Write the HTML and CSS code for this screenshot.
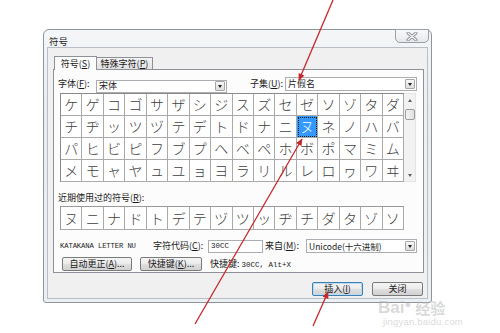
FILE: index.html
```html
<!DOCTYPE html>
<html>
    <head>
        <meta charset="utf-8">
        <title>符号</title>
        <link rel="stylesheet" href="styles.css">
    </head>
    <body>
        <div class="window">
            <div class="titlebar">
                <span class="title">符号</span>
                <span class="close">
                    <svg width="12" height="9" viewBox="0 0 12 9">
                        <path d="M2,1 L10,8 M10,1 L2,8" stroke="#8a8d92" stroke-width="3" stroke-linecap="round"/>
                        <path d="M2,1 L10,8 M10,1 L2,8" stroke="#f4f5f6" stroke-width="1.2" stroke-linecap="round"/>
                    </svg>
                </span>
            </div>
            <div class="client">
                <div class="tabs">
                    <span class="tab active">符号(<u>S</u>)</span>
                    <span class="tab second">特殊字符(<u>P</u>)</span>
                </div>
                <div class="panel">
                    <div class="row font-row">
                        <label class="font-label">字体(<u>F</u>):</label>
                        <span class="combo font-combo">宋体<i class="drop"></i></span>
                        <label class="subset-label">子集(<u>U</u>):</label>
                        <span class="combo subset-combo">片假名<i class="drop"></i></span>
                    </div>
                    <div class="grid-wrap">
                        <div class="grid">
                            <span>ケ</span><span>ゲ</span><span>コ</span><span>ゴ</span><span>サ</span><span>ザ</span><span>シ</span><span>ジ</span><span>ス</span><span>ズ</span><span>セ</span><span>ゼ</span><span>ソ</span><span>ゾ</span><span>タ</span><span>ダ</span>
                            <span>チ</span><span>ヂ</span><span>ッ</span><span>ツ</span><span>ヅ</span><span>テ</span><span>デ</span><span>ト</span><span>ド</span><span>ナ</span><span>ニ</span><span class="selected">ヌ</span><span>ネ</span><span>ノ</span><span>ハ</span><span>バ</span>
                            <span>パ</span><span>ヒ</span><span>ビ</span><span>ピ</span><span>フ</span><span>ブ</span><span>プ</span><span>ヘ</span><span>ベ</span><span>ペ</span><span>ホ</span><span>ボ</span><span>ポ</span><span>マ</span><span>ミ</span><span>ム</span>
                            <span>メ</span><span>モ</span><span>ャ</span><span>ヤ</span><span>ュ</span><span>ユ</span><span>ョ</span><span>ヨ</span><span>ラ</span><span>リ</span><span>ル</span><span>レ</span><span>ロ</span><span>ヮ</span><span>ワ</span><span>ヰ</span>
                        </div>
                        <div class="scroll">
                            <span class="arrow up"></span>
                            <span class="thumb"></span>
                            <span class="arrow down"></span>
                        </div>
                    </div>
                    <div class="recent-label">近期使用过的符号(<u>R</u>):</div>
                    <div class="grid recent">
                        <span>ヌ</span><span>ニ</span><span>ナ</span><span>ド</span><span>ト</span><span>デ</span><span>テ</span><span>ヅ</span><span>ツ</span><span>ッ</span><span>ヂ</span><span>チ</span><span>ダ</span><span>タ</span><span>ゾ</span><span>ソ</span>
                    </div>
                    <div class="row info-row">
                        <span class="char-name">KATAKANA LETTER NU</span>
                        <label class="code-label">字符代码(<u>C</u>):</label>
                        <span class="combo code-input">30CC</span>
                        <label class="from-label">来自(<u>M</u>):</label>
                        <span class="combo from-combo">Unicode(十六进制)<i class="drop"></i></span>
                    </div>
                    <div class="row btn-row">
                        <span class="btn auto-btn">自动更正(<u>A</u>)...</span>
                        <span class="btn key-btn">快捷键(<u>K</u>)...</span>
                        <span class="shortcut">快捷键: <span class="mono">30CC, Alt+X</span></span>
                    </div>
                </div>
                <div class="footer">
                    <span class="btn default">插入(<u>I</u>)</span>
                    <span class="btn">关闭</span>
                </div>
            </div>
        </div>

        <!-- annotation arrows drawn over the screenshot -->
        <svg class="arrows" width="500" height="333" viewBox="0 0 500 333">
            <defs>
                <marker id="head" viewBox="0 0 10 10" refX="9" refY="5" markerWidth="8" markerHeight="7" markerUnits="userSpaceOnUse" orient="auto">
                    <path d="M0,0.5 L10,5 L0,9.5 z" fill="#c4282b"/>
                </marker>
            </defs>
            <line x1="333" y1="0" x2="299" y2="80" stroke="#c4282b" stroke-width="1.3" marker-end="url(#head)"/>
            <line x1="195" y1="324" x2="302" y2="139" stroke="#c4282b" stroke-width="1.3" marker-end="url(#head)"/>
            <line x1="313" y1="326" x2="328" y2="292" stroke="#c4282b" stroke-width="1.3" marker-end="url(#head)"/>
        </svg>

        <div class="watermark">
            <div class="wm-top">Bai<span class="paw">●</span><span class="wm-cn">经验</span></div>
            <div class="wm-url">jingyan.baidu.com</div>
        </div>
    </body>
</html>
```

FILE: styles.css
```css
body {
    margin: 0;
    width: 500px;
    height: 333px;
    overflow: hidden;
    position: relative;
    background: #fff;
    font-family: "Noto Sans CJK SC", "Noto Sans", sans-serif;
    font-size: 9px;
    line-height: 12px;
    color: #1a1a1a;
}
u {
    text-decoration: underline;
    text-underline-offset: 1px;
}

/* window frame */
.window {
    margin: 29px 0 0 43px;
    width: 389px;
    box-sizing: border-box;
    border: 1px solid #8f949a;
    border-radius: 6px 6px 3px 3px;
    background: linear-gradient(to bottom, #f4f6f8, #e8ecf0 30%, #edf0f3);
    padding: 0 3px 3px 3px;
}
.titlebar {
    height: 17px;
    display: flex;
    justify-content: space-between;
}
.title {
    font-size: 9.5px;
    margin: 5px 0 0 2px;
}
.close {
    width: 34px;
    height: 14px;
    box-sizing: border-box;
    margin: -1px -1px 0 0;
    border: 1px solid #9a9ea5;
    border-radius: 0 0 5px 5px;
    background: linear-gradient(#f8f9fa, #e6e9ec);
    display: flex;
    align-items: center;
    justify-content: center;
}
.client {
    background: #f0f0f0;
    border: 1px solid #b7bec6;
    padding: 8px 3px 2px 5px;
}

/* tabs */
.tabs {
    display: flex;
    height: 13px;
    margin-left: 1px;
    position: relative;
    z-index: 1;
}
.tab {
    box-sizing: border-box;
    height: 12px;
    margin-top: 1px;
    border: 1px solid #8e9199;
    border-bottom: none;
    background: linear-gradient(#f3f3f3, #e2e2e2);
    text-align: center;
    line-height: 11px;
}
.tab.active {
    width: 43px;
    height: 14px;
    margin-top: 0;
    background: #fcfcfc;
    line-height: 13px;
}
.tab.second {
    width: 56px;
    border-left: none;
}
.panel {
    box-sizing: border-box;
    height: 204px;
    border: 1px solid #8e9199;
    background: #fcfcfc;
    padding: 7px 0 0 4px;
}

/* form rows */
.row {
    display: flex;
    align-items: center;
}
.font-row {
    height: 14px;
}
.font-label {
    width: 38px;
}
.combo {
    box-sizing: border-box;
    height: 14px;
    border: 1px solid #abadb3;
    background: #fff;
    display: flex;
    align-items: center;
    justify-content: space-between;
    padding-left: 2px;
}
.font-combo {
    width: 131px;
    height: 13px;
    margin-top: 4px;
}
.subset-label {
    width: 58px;
    text-align: right;
    padding-right: 2px;
    box-sizing: border-box;
}
.subset-combo {
    width: 132px;
}
.drop {
    width: 10px;
    height: 10px;
    box-sizing: border-box;
    margin-right: 1px;
    border: 1px solid #a6a6a6;
    border-radius: 1px;
    background: linear-gradient(#f7f7f7, #dcdcdc);
    display: flex;
    align-items: center;
    justify-content: center;
}
.drop::after {
    content: "";
    border-left: 2.5px solid transparent;
    border-right: 2.5px solid transparent;
    border-top: 3px solid #222;
}

/* character grid */
.grid-wrap {
    display: flex;
    margin: 2px 0 0 2px;
}
.grid {
    width: 344px;
    box-sizing: border-box;
    display: grid;
    grid-template-columns: repeat(16, 1fr);
    border-left: 1px solid #8a8a8a;
    border-top: 1px solid #8a8a8a;
    background: #fff;
    font-family: "Noto Sans CJK JP", sans-serif;
    font-weight: 300;
    font-size: 14px;
    color: #404040;
}
.grid span {
    height: 22px;
    box-sizing: border-box;
    border-right: 1px solid #aaa;
    border-bottom: 1px solid #aaa;
    text-align: center;
    line-height: 21px;
}
.grid .selected {
    background: #3399ff;
    color: #fff;
    outline: 1px dotted #1a1a1a;
    outline-offset: -2px;
}
.scroll {
    width: 12px;
    height: 89px;
    box-sizing: border-box;
    border: 1px solid #e4e4e4;
    border-left: none;
    background: #f2f2f2;
    display: flex;
    flex-direction: column;
    align-items: center;
}
.arrow {
    height: 12px;
    width: 10px;
    display: flex;
    align-items: center;
    justify-content: center;
}
.arrow::after {
    content: "";
    border-left: 2.5px solid transparent;
    border-right: 2.5px solid transparent;
}
.up::after {
    border-bottom: 3px solid #606060;
}
.down {
    margin-top: auto;
}
.down::after {
    border-top: 3px solid #606060;
}
.thumb {
    width: 10px;
    height: 11px;
    box-sizing: border-box;
    margin-top: 3px;
    border: 1px solid #9b9b9b;
    border-radius: 2px;
    background: linear-gradient(to right, #f4f4f4, #e0e0e0);
}
.recent-label {
    margin-top: 10px;
    height: 12px;
}
.grid.recent {
    margin: 2px 0 0 2px;
    border-color: #9a9a9a;
}
.grid.recent span {
    height: 23px;
    line-height: 22px;
}

/* code info */
.info-row {
    height: 14px;
    margin-top: 9px;
}
.char-name {
    width: 93px;
    margin-left: 2px;
    font-family: "Liberation Mono", monospace;
    font-size: 7.2px;
    letter-spacing: -0.1px;
}
.code-label {
    width: 55px;
}
.code-input {
    width: 55px;
    height: 13px;
    font-family: "Liberation Mono", monospace;
    font-size: 7.5px;
}
.from-label {
    width: 43px;
    padding-left: 2px;
    box-sizing: border-box;
}
.from-combo {
    width: 111px;
    font-size: 8.5px;
}
.btn-row {
    height: 14px;
    margin-top: 4px;
}
.btn {
    height: 14px;
    box-sizing: border-box;
    border: 1px solid #7a7a7a;
    border-radius: 2px;
    background: linear-gradient(#f4f4f4 0%, #ececec 45%, #dedede 55%, #d2d2d2 100%);
    display: flex;
    align-items: center;
    justify-content: center;
    line-height: 12px;
}
.auto-btn {
    width: 70px;
    margin-left: 4px;
}
.key-btn {
    width: 62px;
    margin-left: 8px;
}
.shortcut {
    margin-left: 8px;
}
.mono {
    font-family: "Liberation Mono", monospace;
    font-size: 7.5px;
}

/* dialog buttons */
.footer {
    display: flex;
    justify-content: flex-end;
    gap: 9px;
    margin: 9px 1px 0 0;
}
.footer .btn {
    width: 51px;
}
.footer .btn.default {
    border-color: #3c7fb1;
    box-shadow: inset 0 0 0 1px #b9dcf3;
}

/* overlays */
.arrows {
    position: absolute;
    left: 0;
    top: 0;
    pointer-events: none;
}
.watermark {
    position: absolute;
    left: 378px;
    top: 300px;
    color: rgba(180, 180, 180, 0.5);
    font-family: "Liberation Sans", sans-serif;
    pointer-events: none;
}
.wm-top {
    font-size: 17px;
    line-height: 15px;
    font-weight: bold;
    display: flex;
    align-items: center;
}
.paw {
    font-size: 11px;
    margin: -6px 4px 0 0;
}
.wm-cn {
    font-family: "Noto Sans CJK SC", sans-serif;
    font-size: 15px;
}
.wm-url {
    margin: 2px 0 0 5px;
    font-size: 9.5px;
    line-height: 10px;
    letter-spacing: 0.2px;
}
```
